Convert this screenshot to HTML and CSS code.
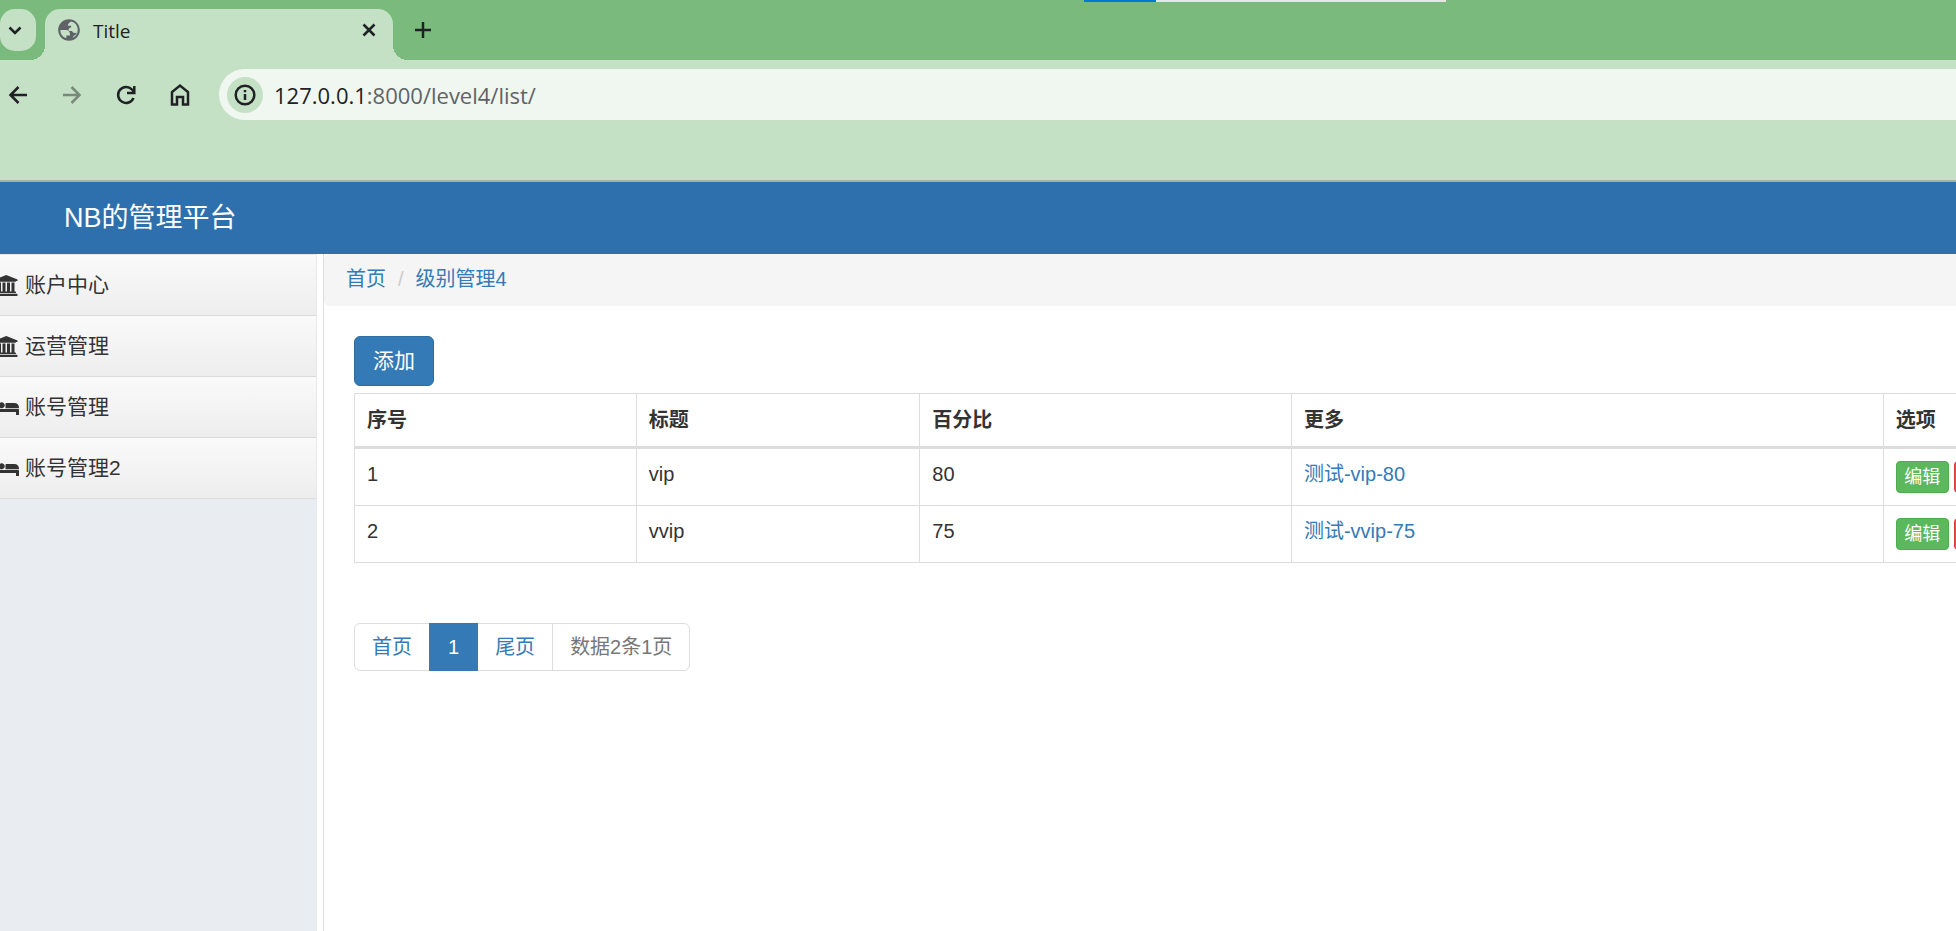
FILE: index.html
```html
<!DOCTYPE html>
<html lang="zh-CN">
<head>
<meta charset="utf-8">
<title>Title</title>
<link rel="stylesheet" href="styles.css">
</head>
<body>
<div class="load-bar"></div>
<header class="browser">
  <div class="tab-strip">
    <button class="tab-search" aria-label="Search tabs">
      <svg width="14" height="14" viewBox="0 0 14 14"><path d="M1.5 4.5 7 10l5.500-5.500" class="line"/></svg>
    </button>
    <div class="tab">
      <svg class="globe" width="26" height="26" viewBox="0 0 24 24"><path d="M12 2C6.480 2 2 6.480 2 12s4.480 10 10 10 10-4.480 10-10S17.520 2 12 2zM4 12h4.400c3.410.02 4.900 1.730 4.450 5.130H9.500v2.470A8.020 8.020 0 0 1 4 12zm10.170 7.700c1.830-.5 1.600-2.700 3.330-3.200 1-.3 1.560-1.100 1.700-2.300-1.800 1-3.700.6-4.400-1.200H12c-1-1.700.2-3.400 2-3.400V8.100h-3.100c.3-1.800 1.100-2.700 2.900-3.900A8 8 0 0 1 14.170 19.700z"/></svg>
      <span class="tab-title">Title</span>
      <button class="icon-btn" aria-label="Close tab">
        <svg width="14" height="14" viewBox="0 0 14 14"><path d="M1.500 1.500l11 11M12.500 1.500l-11 11" class="line"/></svg>
      </button>
    </div>
    <button class="icon-btn new-tab" aria-label="New tab">
      <svg width="16" height="16" viewBox="0 0 16 16"><path d="M8 0v16M0 8h16" class="line"/></svg>
    </button>
  </div>
  <div class="toolbar">
    <nav class="nav-buttons">
      <button class="icon-btn" aria-label="Back"><svg width="22" height="24" viewBox="0 0 22 24"><path d="M20 12H4M11.500 4 3.500 12l8 8" class="line"/></svg></button>
      <button class="icon-btn" aria-label="Forward" disabled><svg width="22" height="24" viewBox="0 0 22 24"><path d="M2 12h16M10.500 4l8 8-8 8" class="line"/></svg></button>
      <button class="icon-btn" aria-label="Reload"><svg width="22" height="24" viewBox="0 0 22 24"><path d="M18.500 15A8 8 0 1 1 17 6.500L19 9M19.300 3v7H12" class="line"/></svg></button>
      <button class="icon-btn" aria-label="Home"><svg width="22" height="24" viewBox="0 0 22 24"><path d="M3 21.500V9l8-6.500L19 9v12.500h-5V14H8v7.500z" class="line"/></svg></button>
    </nav>
    <form class="address">
      <button type="button" class="site-info" aria-label="Site information">
        <svg width="22" height="22" viewBox="0 0 22 22"><circle cx="11" cy="11" r="9.300" class="line"/><path d="M11 10v6M11 6v2.200" class="line"/></svg>
      </button>
      <div class="url" role="textbox" aria-label="Address"><span class="host">127.0.0.1</span>:8000/level4/list/</div>
    </form>
  </div>
</header>

<div class="navbar"><a class="brand" href="#">NB的管理平台</a></div>

<div class="page">
  <aside class="sidebar">
    <ul class="menu">
      <li><a href="#"><svg width="19" height="21" viewBox="427 0 1621 1792"><path d="M960 0l960 384v128h-128q0 26-20.500 45t-48.500 19H197q-28 0-48.500-19T128 512H0V384zM256 640h256v768h128V640h256v768h128V640h256v768h128V640h256v768h59q28 0 48.500 19t20.500 45v64H128v-64q0-26 20.500-45t48.500-19h59V640zm1595 960q28 0 48.500 19t20.500 45v128H0v-128q0-26 20.500-45T69 1600h1782z"/></svg>账户中心</a></li>
      <li><a href="#"><svg width="19" height="21" viewBox="427 0 1621 1792"><path d="M960 0l960 384v128h-128q0 26-20.500 45t-48.500 19H197q-28 0-48.500-19T128 512H0V384zM256 640h256v768h128V640h256v768h128V640h256v768h128V640h256v768h59q28 0 48.500 19t20.500 45v64H128v-64q0-26 20.500-45t48.500-19h59V640zm1595 960q28 0 48.500 19t20.500 45v128H0v-128q0-26 20.500-45T69 1600h1782z"/></svg>运营管理</a></li>
      <li><a href="#"><svg width="19" height="21" viewBox="427 0 1621 1792"><path d="M256 1024h1728q26 0 45 19t19 45v448h-256v-256H256v256H0V320q0-26 19-45t45-19h128q26 0 45 19t19 45v704zm576-320q0-106-75-181t-181-75-181 75-75 181 75 181 181 75 181-75 75-181zm1216 256v-64q0-159-112.500-271.500T1664 512H960q-26 0-45 19t-19 45v384h1152z"/></svg>账号管理</a></li>
      <li><a href="#"><svg width="19" height="21" viewBox="427 0 1621 1792"><path d="M256 1024h1728q26 0 45 19t19 45v448h-256v-256H256v256H0V320q0-26 19-45t45-19h128q26 0 45 19t19 45v704zm576-320q0-106-75-181t-181-75-181 75-75 181 75 181 181 75 181-75 75-181zm1216 256v-64q0-159-112.500-271.500T1664 512H960q-26 0-45 19t-19 45v384h1152z"/></svg>账号管理2</a></li>
    </ul>
  </aside>
  <main class="content">
    <ol class="breadcrumb">
      <li><a href="#">首页</a></li>
      <li><a href="#">级别管理4</a></li>
    </ol>
    <section class="panel">
      <a class="btn btn-primary" href="#">添加</a>
      <table class="table">
        <colgroup><col class="col-id"><col class="col-title"><col class="col-percent"><col class="col-more"><col></colgroup>
        <thead>
          <tr><th>序号</th><th>标题</th><th>百分比</th><th>更多</th><th>选项</th></tr>
        </thead>
        <tbody>
          <tr><td>1</td><td>vip</td><td>80</td><td><a href="#">测试-vip-80</a></td>
            <td><div class="actions"><a class="btn-xs btn-success" href="#">编辑</a><a class="btn-xs btn-danger" href="#" aria-label="删除"></a></div></td></tr>
          <tr><td>2</td><td>vvip</td><td>75</td><td><a href="#">测试-vvip-75</a></td>
            <td><div class="actions"><a class="btn-xs btn-success" href="#">编辑</a><a class="btn-xs btn-danger" href="#" aria-label="删除"></a></div></td></tr>
        </tbody>
      </table>
      <ul class="pagination">
        <li><a href="#">首页</a></li>
        <li class="active"><a href="#">1</a></li>
        <li><a href="#">尾页</a></li>
        <li class="disabled"><span>数据2条1页</span></li>
      </ul>
    </section>
  </main>
</div>
</body>
</html>
```

FILE: styles.css
```css
* {
  box-sizing: border-box;
}

body {
  margin: 0;
  min-height: 100vh;
  display: flex;
  flex-direction: column;
  background: #fff;
  color: #333;
  font: 20px/28px "Liberation Sans", "Noto Sans CJK SC", sans-serif;
}

a {
  color: #337ab7;
  text-decoration: none;
}

ul,
ol {
  margin: 0;
  padding: 0;
  list-style: none;
}

button {
  padding: 0;
  border: 0;
  background: none;
  color: inherit;
}

svg {
  display: block;
  flex: none;
  fill: currentColor;
}

.line {
  fill: none;
  stroke: currentColor;
  stroke-width: 2.5;
}

/* Browser frame */
.load-bar {
  position: absolute;
  top: 0;
  left: 1084px;
  width: 362px;
  height: 2px;
  background: linear-gradient(to right, #0078d7 20%, #e6e6e6 20%);
}

.browser {
  background: #c5e1c5;
  border-bottom: 2px solid #9db59f;
  color: #1f2124;
  font-family: "Open Sans", "Noto Sans", sans-serif;
}

.tab-strip {
  display: flex;
  height: 60px;
  padding-top: 9px;
  background: #7abb7d;
}

.tab-search {
  display: flex;
  align-items: center;
  justify-content: flex-end;
  width: 36px;
  height: 42px;
  padding-right: 14px;
  border-radius: 15px;
  background: #c5e1c5;
}

.tab {
  position: relative;
  display: flex;
  align-items: center;
  width: 348px;
  margin-left: 9px;
  padding: 0 17px 0 11px;
  border-radius: 15px 15px 0 0;
  background: #c5e1c5;
}

.tab::before,
.tab::after {
  content: "";
  position: absolute;
  bottom: 0;
  width: 15px;
  height: 15px;
}

.tab::before {
  right: 100%;
  background: radial-gradient(circle at 0 0, transparent 15px, #c5e1c5 15px);
}

.tab::after {
  left: 100%;
  background: radial-gradient(circle at 100% 0, transparent 15px, #c5e1c5 15px);
}

.globe {
  margin-bottom: 9px;
  color: #5f6368;
}

.tab-title {
  flex: 1;
  margin-bottom: 7px;
  padding-left: 11px;
  font-size: 19px;
}

.tab .icon-btn {
  margin-bottom: 9px;
}

.new-tab {
  margin: 0 0 9px 22px;
}

.toolbar {
  display: flex;
  align-items: center;
  height: 120px;
  padding-bottom: 51px;
}

.nav-buttons {
  display: flex;
  gap: 32px;
  padding: 0 28px 0 7px;
}

.icon-btn:disabled {
  opacity: 0.45;
}

.address {
  flex: 1;
  display: flex;
  align-items: center;
  height: 51px;
  padding-left: 8px;
  border-radius: 26px 0 0 26px;
  background: #f0f7f0;
}

.site-info {
  display: grid;
  place-items: center;
  width: 36px;
  height: 36px;
  border-radius: 50%;
  background: #c5e1c5;
}

.url {
  padding-left: 11px;
  color: #5f6368;
  font-size: 22px;
}

.host {
  color: #1f2124;
}

/* Site */
.navbar {
  height: 72px;
  padding-left: 64px;
  background: #2e70ad;
}

.brand {
  display: block;
  color: #fff;
  font-size: 27px;
  line-height: 72px;
}

.page {
  flex: 1;
  display: flex;
  gap: 6px;
}

.sidebar {
  width: 317px;
  border-right: 1px solid #e6e9ee;
  background: #e9edf2;
}

.menu {
  border-top: 1px solid #e7e7e7;
}

.menu a {
  display: flex;
  align-items: center;
  gap: 6px;
  height: 61px;
  border-bottom: 1px solid #dbdbdb;
  background: linear-gradient(#fafafa, #ededed);
  color: #333;
  font-size: 21px;
}

.content {
  flex: 1;
  min-width: 0;
  overflow: hidden;
  border-left: 1px solid #ddd;
}

.breadcrumb {
  display: flex;
  padding: 11px 22px 13px;
  border-radius: 6px 0 0 6px;
  background: #f5f5f5;
}

.breadcrumb li + li::before {
  content: "/";
  padding: 0 12px;
  color: #ccc;
}

.panel {
  padding: 30px 0 0 30px;
}

.btn {
  display: inline-block;
  padding: 10px 18px;
  border-radius: 6px;
  font-size: 21px;
  vertical-align: top;
}

.btn-primary {
  border: 1px solid #2e6da4;
  background: #337ab7;
  color: #fff;
}

.table {
  width: 110%;
  margin-top: 7px;
  border-collapse: collapse;
  table-layout: fixed;
}

.col-id {
  width: 16%;
}

.col-title {
  width: 16.1%;
}

.col-percent {
  width: 21.1%;
}

.col-more {
  width: 33.6%;
}

.table th,
.table td {
  padding: 12px;
  border: 1px solid #ddd;
  text-align: left;
  vertical-align: top;
}

.table th {
  border-bottom-width: 3px;
}

.table td {
  line-height: 26px;
}

.actions {
  display: flex;
  gap: 5px;
}

.btn-xs {
  height: 32px;
  min-width: 53px;
  padding: 0 7px;
  border: 1px solid;
  border-radius: 4px;
  color: #fff;
  font-size: 18px;
  line-height: 30px;
  text-align: center;
}

.btn-success {
  border-color: #4cae4c;
  background: #5cb85c;
}

.btn-danger {
  border-color: #d43f3a;
  background: #d9534f;
}

.pagination {
  display: flex;
  margin-top: 60px;
}

.pagination li + li {
  margin-left: -1px;
}

.pagination a,
.pagination span {
  display: block;
  padding: 9px 17px;
  border: 1px solid #ddd;
}

.pagination li:first-child a {
  border-radius: 6px 0 0 6px;
}

.pagination li:last-child span {
  border-radius: 0 6px 6px 0;
}

.pagination .active a {
  position: relative;
  padding: 9px 18px;
  border-color: #337ab7;
  background: #337ab7;
  color: #fff;
}

.pagination .disabled span {
  color: #777;
}
```
